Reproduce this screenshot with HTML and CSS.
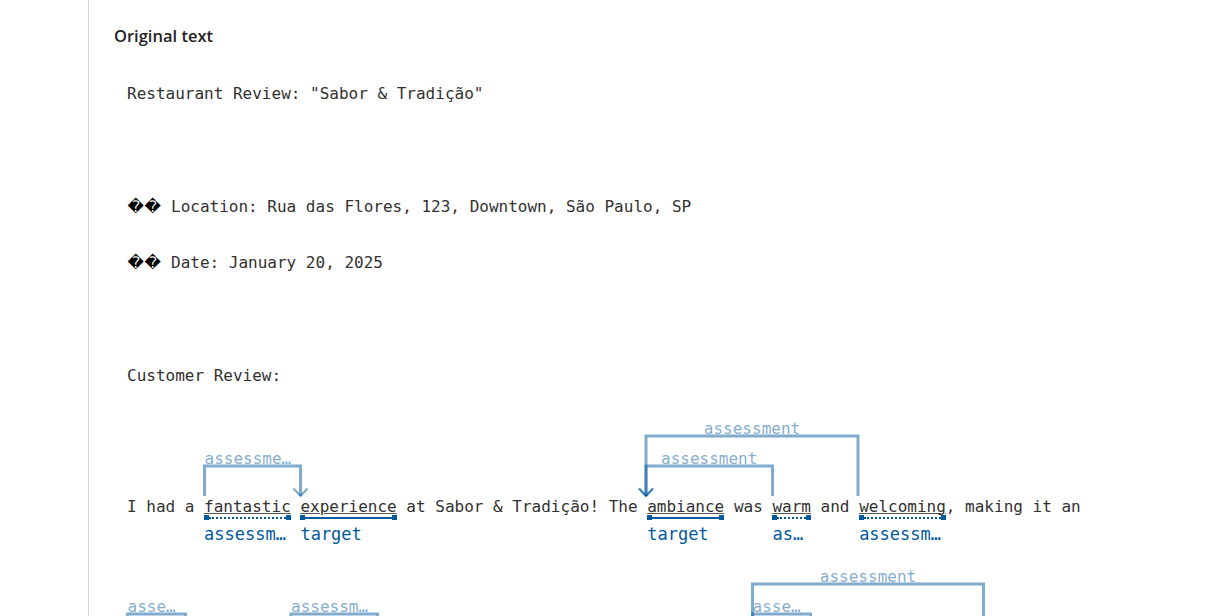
FILE: index.html
```html
<!DOCTYPE html>
<html lang="en">
<head>
<meta charset="utf-8">
<title>Original text</title>
<link rel="stylesheet" href="styles.css">
</head>
<body>
<div class="panel">
  <h2 class="title">Original text</h2>
  <div class="doc">
    <div class="line txt">Restaurant Review: "Sabor &amp; Tradição"</div>
    <div class="blank"></div>
    <div class="line txt"><span class="rep">&#xFFFD;</span><span class="rep">&#xFFFD;</span> Location: Rua das Flores, 123, Downtown, São Paulo, SP</div>
    <div class="line txt"><span class="rep">&#xFFFD;</span><span class="rep">&#xFFFD;</span> Date: January 20, 2025</div>
    <div class="blank"></div>
    <div class="line txt">Customer Review:</div>

    <div class="ann">
      <svg class="arcs" width="1081" height="93" viewBox="0 0 1081 93">
        <g class="arc">
          <path d="M77.5 92V62H173.5V92"/>
          <path class="head" d="M166.5 84.5L173.5 92L180.5 84.5"/>
          <text x="77.5" y="59.5">assessme…</text>
        </g>
        <g class="arc">
          <path d="M645.5 92V62H519V92"/>
          <path class="head" d="M512 84.5L519 92L526 84.5"/>
          <text x="582.2" y="59.5" text-anchor="middle">assessment</text>
        </g>
        <g class="arc">
          <path d="M731 92V32H519V92"/>
          <path class="head" d="M512 84.5L519 92L526 84.5"/>
          <text x="625" y="29.5" text-anchor="middle">assessment</text>
        </g>
      </svg>
      <div class="row">
        <span class="t">I had a </span>
        <span class="tok dotted"><span class="w">fantastic</span><span class="bar"><i></i></span><span class="lbl">assessm…</span></span>
        <span class="t"> </span>
        <span class="tok"><span class="w">experience</span><span class="bar"><i></i></span><span class="lbl">target</span></span>
        <span class="t"> at Sabor &amp; Tradição! The </span>
        <span class="tok"><span class="w">ambiance</span><span class="bar"><i></i></span><span class="lbl">target</span></span>
        <span class="t"> was </span>
        <span class="tok dotted"><span class="w">warm</span><span class="bar"><i></i></span><span class="lbl">as…</span></span>
        <span class="t"> and </span>
        <span class="tok dotted"><span class="w">welcoming</span><span class="bar"><i></i></span><span class="lbl">assessm…</span></span>
        <span class="t">, making it an</span>
      </div>
    </div>

    <div class="ann">
      <svg class="arcs" width="1081" height="93" viewBox="0 0 1081 93">
        <g class="arc">
          <path d="M0.5 92V62H58.5V92"/>
          <path class="head" d="M51.5 84.5L58.5 92L65.5 84.5"/>
          <text x="0.5" y="59.5">asse…</text>
        </g>
        <g class="arc">
          <path d="M250.5 92V62H164V92"/>
          <path class="head" d="M157 84.5L164 92L171 84.5"/>
          <text x="164" y="59.5">assessm…</text>
        </g>
        <g class="arc">
          <path d="M683.5 92V62H625.5V92"/>
          <path class="head" d="M618.5 84.5L625.5 92L632.5 84.5"/>
          <text x="625.5" y="59.5">asse…</text>
        </g>
        <g class="arc">
          <path d="M856.5 92V32H625.5V92"/>
          <path class="head" d="M618.5 84.5L625.5 92L632.5 84.5"/>
          <text x="741" y="29.5" text-anchor="middle">assessment</text>
        </g>
      </svg>
      <div class="row">
        <span class="tok dotted"><span class="w">truly</span><span class="bar"><i></i></span><span class="lbl">ass…</span></span>
        <span class="t"> </span>
        <span class="tok"><span class="w">delightful</span><span class="bar"><i></i></span><span class="lbl">target</span></span>
        <span class="t"> </span>
        <span class="tok"><span class="w">evening</span><span class="bar"><i></i></span><span class="lbl">target</span></span>
        <span class="t">. </span>
        <span class="tok dotted"><span class="w">Friendly</span><span class="bar"><i></i></span><span class="lbl">assess…</span></span>
        <span class="t"> staff welcomed us warmly, and </span>
        <span class="tok"><span class="w">meals</span><span class="bar"><i></i></span><span class="lbl">tar…</span></span>
        <span class="t"> </span>
        <span class="tok dotted"><span class="w">fresh</span><span class="bar"><i></i></span><span class="lbl">ass…</span></span>
        <span class="t">, hearty and </span>
        <span class="tok dotted"><span class="w">delicious</span><span class="bar"><i></i></span><span class="lbl">assessm…</span></span>
        <span class="t">.</span>
      </div>
    </div>
  </div>
</div>
</body>
</html>
```
FILE: styles.css
```css
* {
  box-sizing: border-box;
}

body {
  margin: 0;
  background: #ffffff;
  color: #323130;
}

.panel {
  margin-left: 88px;
  border-left: 1px solid #d6d6d6;
  min-height: 100vh;
  padding: 24px 0 0 25px;
}

.title {
  margin: 0;
  font-family: "Open Sans", "Noto Sans", sans-serif;
  font-weight: 600;
  font-size: 16.5px;
  line-height: 24px;
  color: #242424;
}

.doc {
  margin: 18px 0 0 13px;
  font-family: "DejaVu Sans Mono", monospace;
  font-size: 16px;
  color: #323130;
}

.line {
  height: 56px;
  line-height: 56px;
}

.txt {
  white-space: pre;
}

.blank {
  height: 57px;
}

.rep {
  display: inline-block;
  width: 17.2px;
  text-align: center;
  font-family: "DejaVu Sans", sans-serif;
  font-size: 16px;
  color: #000;
}

.ann {
  padding-bottom: 6px;
}

.arcs {
  display: block;
  overflow: visible;
}

.arc path {
  fill: none;
  stroke: #005a9e;
  stroke-opacity: 0.5;
  stroke-width: 3;
}

.arc path.head {
  stroke-width: 2.2;
}

.arc text {
  font-family: "DejaVu Sans Mono", monospace;
  font-size: 16px;
  fill: #005a9e;
  fill-opacity: 0.5;
}

.row {
  display: flex;
  align-items: flex-start;
  line-height: 20px;
}

.t,
.w,
.lbl {
  white-space: pre;
}

.tok {
  display: flex;
  flex-direction: column;
}

.w {
  text-decoration: underline;
  text-decoration-color: #555555;
  text-decoration-thickness: 1px;
  text-underline-offset: 0.5px;
}

.bar {
  display: flex;
  align-items: center;
  height: 5px;
  margin-top: -2px;
}

.bar::before,
.bar::after {
  content: "";
  flex: none;
  width: 5px;
  height: 5px;
  background: #005a9e;
}

.bar i {
  flex: 1;
  height: 0;
  border-top: 2px solid #005a9e;
}

.dotted .bar i {
  border-top-style: dotted;
}

.lbl {
  margin-top: 3px;
  margin-bottom: 1px;
  font-size: 17px;
  line-height: 22px;
  color: #005a9e;
  overflow: hidden;
  text-overflow: ellipsis;
}
```
